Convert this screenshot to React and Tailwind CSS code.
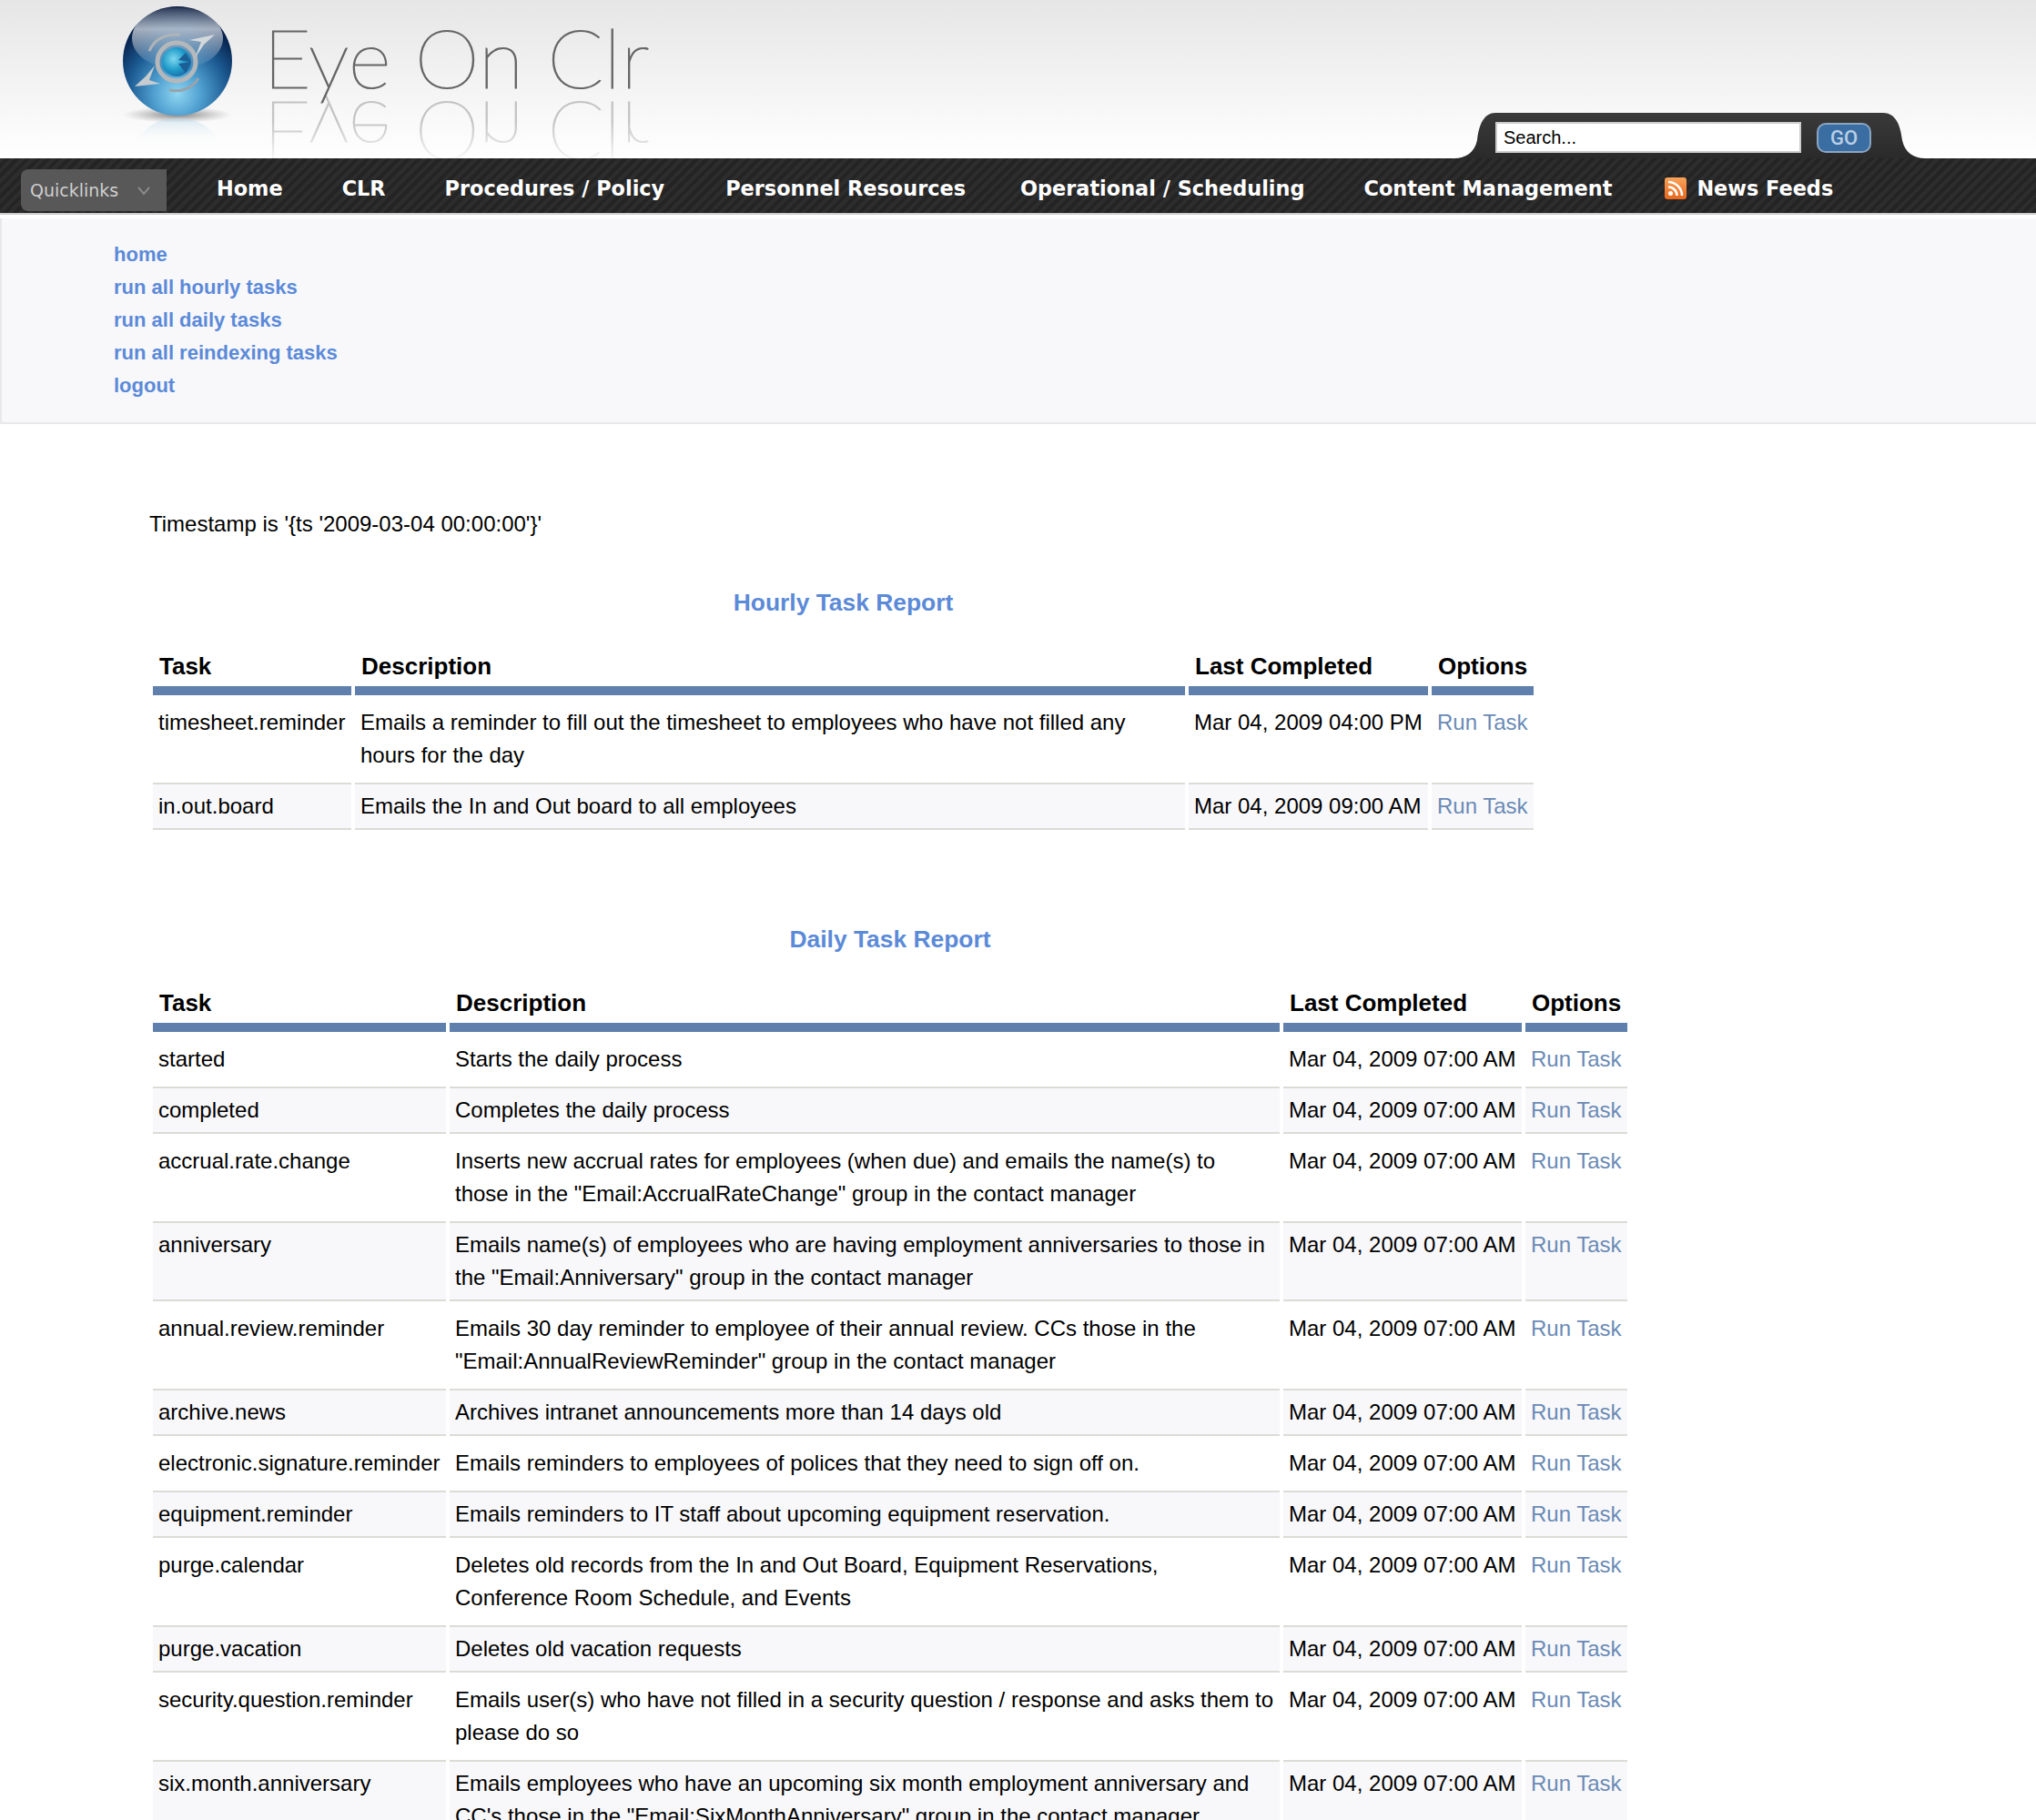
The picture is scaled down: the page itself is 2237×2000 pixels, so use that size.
// Eye On Clr - task report page
const navItems = [
    { label: 'Home', cls: 'ml-[55px] mt-[8px]' },
    { label: 'CLR', cls: 'ml-[65px] mt-[8px]' },
    { label: 'Procedures / Policy', cls: 'ml-[65px] mt-[8px]' },
    { label: 'Personnel Resources', cls: 'ml-[67px] mt-[8px]' },
    { label: 'Operational / Scheduling', cls: 'ml-[60px] mt-[8px]' },
    { label: 'Content Management', cls: 'ml-[65px] mt-[8px]' },
];

const sideLinks = ['home', 'run all hourly tasks', 'run all daily tasks', 'run all reindexing tasks', 'logout'];

const hourlyRows = [
    ['timesheet.reminder', 'Emails a reminder to fill out the timesheet to employees who have not filled any hours for the day', 'Mar 04, 2009 04:00 PM'],
    ['in.out.board', 'Emails the In and Out board to all employees', 'Mar 04, 2009 09:00 AM'],
];

const dailyTime = 'Mar 04, 2009 07:00 AM';
const dailyRows = [
    ['started', 'Starts the daily process', dailyTime],
    ['completed', 'Completes the daily process', dailyTime],
    ['accrual.rate.change', 'Inserts new accrual rates for employees (when due) and emails the name(s) to those in the "Email:AccrualRateChange" group in the contact manager', dailyTime],
    ['anniversary', 'Emails name(s) of employees who are having employment anniversaries to those in the "Email:Anniversary" group in the contact manager', dailyTime],
    ['annual.review.reminder', 'Emails 30 day reminder to employee of their annual review. CCs those in the "Email:AnnualReviewReminder" group in the contact manager', dailyTime],
    ['archive.news', 'Archives intranet announcements more than 14 days old', dailyTime],
    ['electronic.signature.reminder', 'Emails reminders to employees of polices that they need to sign off on.', dailyTime],
    ['equipment.reminder', 'Emails reminders to IT staff about upcoming equipment reservation.', dailyTime],
    ['purge.calendar', 'Deletes old records from the In and Out Board, Equipment Reservations, Conference Room Schedule, and Events', dailyTime],
    ['purge.vacation', 'Deletes old vacation requests', dailyTime],
    ['security.question.reminder', 'Emails user(s) who have not filled in a security question / response and asks them to please do so', dailyTime],
    ['six.month.anniversary', 'Emails employees who have an upcoming six month employment anniversary and CC\'s those in the "Email:SixMonthAnniversary" group in the contact manager', dailyTime],
];

function Globe() {
    return (
        <svg width="160" height="174" viewBox="0 0 160 174" className="shrink-0 ml-[120px]">
            <defs>
                <radialGradient id="ball" cx="50%" cy="80%" r="78%">
                    <stop offset="0%" stopColor="#8fd6f2" />
                    <stop offset="28%" stopColor="#4f9fd0" />
                    <stop offset="58%" stopColor="#1c5b93" />
                    <stop offset="85%" stopColor="#07244f" />
                    <stop offset="100%" stopColor="#031438" />
                </radialGradient>
                <linearGradient id="gloss" x1="0" y1="0" x2="0" y2="1">
                    <stop offset="0%" stopColor="#ffffff" stopOpacity="0.15" />
                    <stop offset="35%" stopColor="#e8edf2" stopOpacity="0.7" />
                    <stop offset="100%" stopColor="#ffffff" stopOpacity="0" />
                </linearGradient>
                <radialGradient id="eye" cx="40%" cy="40%" r="65%">
                    <stop offset="0%" stopColor="#7fd8ef" />
                    <stop offset="60%" stopColor="#1f9ac9" />
                    <stop offset="100%" stopColor="#1a6ea8" />
                </radialGradient>
                <radialGradient id="shadow">
                    <stop offset="0%" stopColor="#555" stopOpacity="0.75" />
                    <stop offset="100%" stopColor="#888" stopOpacity="0" />
                </radialGradient>
                <linearGradient id="mirror" x1="0" y1="0" x2="0" y2="1">
                    <stop offset="0%" stopColor="#b9d9ea" stopOpacity="0.55" />
                    <stop offset="100%" stopColor="#ffffff" stopOpacity="0" />
                </linearGradient>
            </defs>
            <ellipse cx="75" cy="126" rx="60" ry="9" fill="url(#shadow)" />
            <path d="M30 158 C38 138 55 130 75 130 C95 130 112 138 122 158 Z" fill="url(#mirror)" />
            <circle cx="75" cy="67" r="60" fill="url(#ball)" />
            <ellipse cx="75" cy="42" rx="50" ry="34" fill="url(#gloss)" />
            <circle cx="74" cy="68" r="21" fill="none" stroke="#b4b8bb" strokeWidth="5" />
            <circle cx="74" cy="68" r="16" fill="url(#eye)" />
            <path d="M90 68 L76 66 L84 58 Z M90 68 L76 70 L84 80 Z" fill="#1c5f96" />
            <path d="M44 56 C50 42 62 37 78 38" fill="none" stroke="#aeb4b8" strokeWidth="3" />
            <path d="M66 99 C80 102 92 96 98 86" fill="none" stroke="#9aa3a8" strokeWidth="3" />
            <path d="M116 38 L88 44 L101 46 L94 64 L104 49 Z" fill="#d3d8db" />
            <path d="M28 95 L56 92 L44 88 L50 72 L40 84 Z" fill="#c5cbcf" />
        </svg>
    );
}

function Logo() {
    return (
        <div className="ml-[9px] flex flex-col font-['Lato',sans-serif] text-[91px] leading-[86px] font-thin text-[#666] whitespace-nowrap [-webkit-text-stroke:1.2px_#666]">
            <div className="pt-[19px]">Eye On Clr</div>
            <div className="-mt-[1px] -scale-y-100 opacity-35 [mask-image:linear-gradient(to_top,black_35%,transparent_90%)]" aria-hidden="true">
                Eye On Clr
            </div>
        </div>
    );
}

function SearchTab() {
    return (
        <div className="ml-auto mr-[122px] flex self-end h-[50px]">
            <svg width="45" height="50" viewBox="0 0 45 50" className="shrink-0">
                <defs>
                    <linearGradient id="tab" x1="0" y1="0" x2="0" y2="1">
                        <stop offset="0%" stopColor="#3a3a3a" />
                        <stop offset="100%" stopColor="#2a2a2a" />
                    </linearGradient>
                </defs>
                <path d="M0 50 C12 50 22 44 25 30 C27 12 33 0 45 0 L45 50 Z" fill="url(#tab)" />
            </svg>
            <div className="w-[426px] pt-[10px] bg-gradient-to-b from-[#3a3a3a] to-[#2a2a2a] flex items-start">
                <div className="w-[336px] h-[34px] border-2 border-[#cccccc] bg-white pl-[7px] text-[20px] leading-[30px] text-black">Search...</div>
                <div className="ml-[17px] mt-px w-[60px] h-[33px] rounded-[10px] border-2 border-[#8ba5c1] bg-[#3a6ea3] text-center text-[22px] leading-[29px] font-medium text-[#b9cfe6] font-['Roboto',sans-serif]">GO</div>
            </div>
            <svg width="46" height="50" viewBox="0 0 46 50" className="shrink-0">
                <path d="M46 50 C34 50 24 44 21 30 C19 12 13 0 0 0 L0 50 Z" fill="url(#tab)" />
            </svg>
        </div>
    );
}

function NavBar() {
    return (
        <nav className="h-[60px] flex items-center bg-[#282828] bg-[repeating-linear-gradient(135deg,#2d2d2d_0px,#2d2d2d_4px,#242424_4px,#242424_8px)] font-['DejaVu_Sans',sans-serif] text-[22.4px] font-bold text-white whitespace-nowrap">
            <div className="ml-[23px] mt-[11px] mb-px w-[160px] h-[46px] shrink-0 flex items-center rounded-l-lg bg-[#585858] pl-[10px] text-[19px] font-normal text-[#cfcfcf]">
                Quicklinks
                <svg width="16" height="10" viewBox="0 0 16 10" className="ml-[20px] mt-[2px]" fill="none" stroke="#8a8a8a" strokeWidth="2">
                    <path d="M2 1 L8 8 L14 1" />
                </svg>
            </div>
            {navItems.map((item) => (
                <a key={item.label} className={item.cls}>{item.label}</a>
            ))}
            <svg width="24" height="24" viewBox="0 0 24 24" className="ml-[58px] mt-[5px] shrink-0">
                <defs>
                    <linearGradient id="rss" x1="0" y1="0" x2="0" y2="1">
                        <stop offset="0%" stopColor="#f9a35a" />
                        <stop offset="100%" stopColor="#e8671c" />
                    </linearGradient>
                </defs>
                <rect width="24" height="24" rx="3" fill="url(#rss)" />
                <circle cx="6.5" cy="17.5" r="2.5" fill="#fff" />
                <path d="M4 10.5 A9.5 9.5 0 0 1 13.5 20" fill="none" stroke="#fff" strokeWidth="2.6" />
                <path d="M4 5 A15 15 0 0 1 19 20" fill="none" stroke="#fff" strokeWidth="2.6" />
            </svg>
            <a className="ml-[11px] mt-[8px]">News Feeds</a>
        </nav>
    );
}

function Report({ title, rows, tableCls, taskCls, timeCls, wrapCls }) {
    return (
        <section className={wrapCls}>
            <h2 className="h-[36px] text-center text-[26.4px] leading-9 font-bold text-[#5b8ad8]">{title}</h2>
            <table className={`mt-[34px] table-fixed border-separate border-spacing-x-1 border-spacing-y-0 text-[24px] leading-9 text-black ${tableCls}`}>
                <thead>
                    <tr className="text-[26px]">
                        <th className={`border-b-[10px] border-[#5f80ac] pb-1 pl-[7px] text-left font-bold ${taskCls}`}>Task</th>
                        <th className="w-[912px] border-b-[10px] border-[#5f80ac] pb-1 pl-[7px] text-left font-bold">Description</th>
                        <th className={`border-b-[10px] border-[#5f80ac] pb-1 pl-[7px] text-left font-bold ${timeCls}`}>Last Completed</th>
                        <th className="w-[112px] border-b-[10px] border-[#5f80ac] pb-1 pl-[7px] text-left font-bold">Options</th>
                    </tr>
                </thead>
                <tbody>
                    {rows.map((row, i) => {
                        const cell = i % 2 === 1
                            ? 'border-y-2 border-[#dcdcd6] bg-[#f8f8fb] px-1.5 py-1.5 align-top'
                            : 'px-1.5 py-3 align-top';
                        return (
                            <tr key={row[0]}>
                                <td className={cell}>{row[0]}</td>
                                <td className={cell}>{row[1]}</td>
                                <td className={`${cell} whitespace-nowrap`}>{row[2]}</td>
                                <td className={`${cell} whitespace-nowrap text-[#6a8ab5]`}>Run Task</td>
                            </tr>
                        );
                    })}
                </tbody>
            </table>
        </section>
    );
}

export default function App() {
    return (
        <div className="h-[2000px] overflow-hidden bg-white font-['Liberation_Sans',Arial,sans-serif]">
            <header className="h-[174px] flex overflow-hidden bg-gradient-to-b from-[#e6e6e6] to-[#ffffff]">
                <Globe />
                <Logo />
                <SearchTab />
            </header>
            <NavBar />
            <div className="mb-1 h-[2px] bg-[#cccccc]" />
            <div className="h-[226px] border-b-2 border-l-2 border-[#e8e8e8] bg-[#f8f8fb] pl-[123px] pt-[22px]">
                {sideLinks.map((link) => (
                    <a key={link} className="block text-[22px] leading-9 font-bold text-[#5b8ad8]">{link}</a>
                ))}
            </div>
            <main className="pl-[164px] pt-[92px]">
                <p className="text-[24px] leading-9 text-black">Timestamp is '{"{"}ts '2009-03-04 00:00:00'{"}"}'</p>
                <Report title="Hourly Task Report" rows={hourlyRows} wrapCls="mt-[50px] w-[1525px]" tableCls="w-[1525px]" taskCls="w-[218px]" timeCls="w-[263px]" />
                <Report title="Daily Task Report" rows={dailyRows} wrapCls="mt-[102px] w-[1628px]" tableCls="w-[1628px]" taskCls="w-[322px]" timeCls="w-[262px]" />
            </main>
        </div>
    );
}
